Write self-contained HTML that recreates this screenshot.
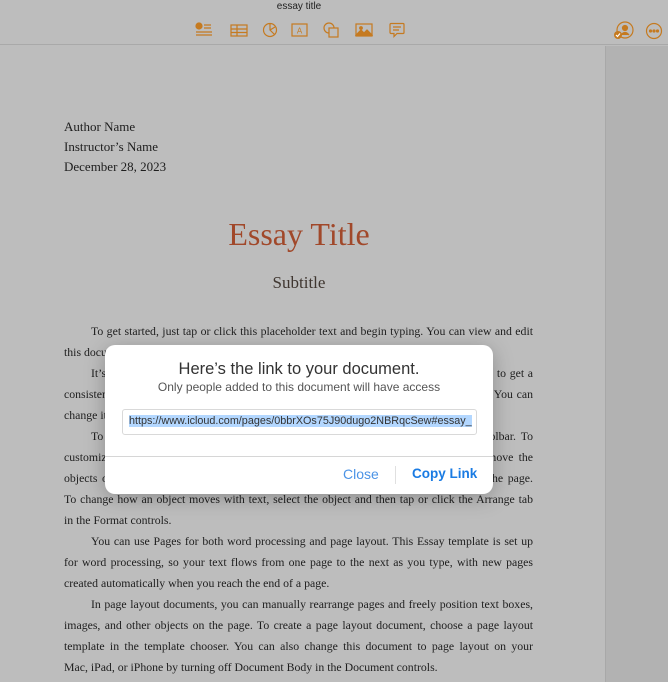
<!DOCTYPE html>
<html><head><meta charset="utf-8"><style>
*{margin:0;padding:0;box-sizing:border-box}
body{width:668px;height:682px;overflow:hidden;background:#bdbdbd;position:relative;font-family:"Liberation Sans",sans-serif}
.top{position:absolute;left:0;top:0;width:668px;height:45px;background:#bdbdbd;border-bottom:1px solid #a9a9a9}
.ttl{position:absolute;top:1px;left:0;width:598px;text-align:center;font-size:10px;color:#222}
.side{position:absolute;left:605px;top:46px;width:63px;height:636px;background:#b2b2b2;border-left:1px solid #a8a8a8}
svg.i{position:absolute}
.doc{position:absolute;font-family:"Liberation Serif",serif;color:#1e1e1e}
.hdr{left:64px;top:117px;font-size:13px;line-height:20px}
.et{left:0;width:598px;text-align:center;top:216px;font-size:32px;color:#a1482a}
.st{left:0;width:598px;text-align:center;top:273px;font-size:17px;color:#3f3630}
.body{left:64px;top:321px;width:469px;font-size:11.8px;line-height:21px}
.l{text-align:justify;text-align-last:justify;height:21px;overflow:hidden}
.in{padding-left:27px}
.e{text-align-last:left}
.dlg{position:absolute;left:105px;top:345px;width:388px;height:149px;background:#fff;border-radius:10px;box-shadow:0 4px 20px rgba(0,0,0,.25)}
.dt{position:absolute;top:15px;width:100%;text-align:center;font-size:16.5px;color:#333}
.ds{position:absolute;top:35px;width:100%;text-align:center;font-size:12px;color:#555}
.inp{position:absolute;left:17px;top:64px;width:355px;height:26px;border:1px solid #d9d9d9;border-radius:3px;padding:5px 0 0 6px;font-size:10.8px;color:#333;white-space:nowrap;overflow:hidden}
.inp span{background:#b3d7ff}
.sep{position:absolute;left:0;top:111px;width:100%;height:1px;background:#d6d6d6}
.vs{position:absolute;left:290px;top:121px;width:1px;height:18px;background:#e0e0e0}
.b1{position:absolute;left:238px;top:121px;font-size:14px;color:#4b93e6}
.b2{position:absolute;left:307px;top:121px;font-size:13.5px;color:#1a7be3;font-weight:bold}
</style></head><body>
<div class="top"><div class="ttl">essay title</div></div>
<svg class="i" style="left:195px;top:22px" width="18" height="16" viewBox="0 0 18 16" fill="none" stroke="#c57a20" stroke-width="1.2"><circle cx="4" cy="4" r="3" fill="#c57a20"/><path d="M9 3h7M9 6h7M1 10h16M1 13h16"/></svg>
<svg class="i" style="left:230px;top:24px" width="18" height="13" viewBox="0 0 18 13" fill="none" stroke="#c57a20" stroke-width="1.2"><rect x="1" y="1" width="16" height="11"/><path d="M1 5h16M1 8.5h16M7 1v11"/></svg>
<svg class="i" style="left:262px;top:22px" width="16" height="16" viewBox="0 0 16 16" fill="none" stroke="#c57a20" stroke-width="1.2"><circle cx="8" cy="8" r="6.5"/><path d="M8 1.5V8l4.5 4.5M8 8l5-3"/></svg>
<svg class="i" style="left:291px;top:23px" width="17" height="14" viewBox="0 0 17 14" fill="none" stroke="#c57a20" stroke-width="1.2"><rect x="1" y="1" width="15" height="12"/><text x="8.5" y="10.5" font-size="8" text-anchor="middle" fill="#c57a20" stroke="none" font-family="Liberation Sans">A</text></svg>
<svg class="i" style="left:323px;top:22px" width="16" height="16" viewBox="0 0 16 16" fill="none" stroke="#c57a20" stroke-width="1.2"><circle cx="6" cy="6" r="5"/><rect x="6" y="6" width="9" height="9" fill="#bdbdbd"/></svg>
<svg class="i" style="left:355px;top:23px" width="18" height="14" viewBox="0 0 18 14" fill="none" stroke="#c57a20" stroke-width="1.2"><rect x="1" y="1" width="16" height="12"/><path d="M1 12l5-5 3 3 3-3 5 5z" fill="#c57a20"/><circle cx="6" cy="5" r="1.3" fill="#c57a20"/></svg>
<svg class="i" style="left:389px;top:22px" width="16" height="16" viewBox="0 0 16 16" fill="none" stroke="#c57a20" stroke-width="1.2"><path d="M2 1.5h12a1 1 0 0 1 1 1v8a1 1 0 0 1-1 1H8l-3 3v-3H2a1 1 0 0 1-1-1v-8a1 1 0 0 1 1-1zM4 5h8M4 8h6"/></svg>
<svg class="i" style="left:613px;top:21px" width="21" height="20" viewBox="0 0 21 20" fill="none" stroke="#c57a20" stroke-width="1.2"><circle cx="12" cy="9" r="8"/><circle cx="12" cy="7" r="2.5" fill="#c57a20"/><path d="M8 14q4-5 8 0" fill="#c57a20"/><circle cx="5" cy="14" r="4" fill="#c57a20" stroke="none"/><path d="M3 14l1.5 1.5L7 12.5" stroke="#fff"/></svg>
<svg class="i" style="left:645px;top:22px" width="18" height="18" viewBox="0 0 18 18" fill="none" stroke="#c57a20" stroke-width="1.2"><circle cx="9" cy="9" r="7.5"/><circle cx="5.5" cy="9" r="1" fill="#c57a20"/><circle cx="9" cy="9" r="1" fill="#c57a20"/><circle cx="12.5" cy="9" r="1" fill="#c57a20"/></svg>
<div class="side"></div>
<div class="doc hdr">Author Name<br>Instructor’s Name<br>December 28, 2023</div>
<div class="doc et">Essay Title</div>
<div class="doc st">Subtitle</div>
<div class="doc body">
<div class="l in">To get started, just tap or click this placeholder text and begin typing. You can view and edit</div>
<div class="l e">this document in Pages on your Mac, iPad, iPhone, or on iCloud.com.</div>
<div class="l in">It’s easy to edit text, change fonts, and add beautiful graphics. Use paragraph styles to get a</div>
<div class="l">consistent look throughout your document. For example, this paragraph uses Body style. You can</div>
<div class="l e">change it in the Text tab of the Format controls.</div>
<div class="l in">To add images, charts, shapes, and other objects, tap or click a button in the toolbar. To</div>
<div class="l">customize an object, select it and then use the controls in the Format tab. You can move the</div>
<div class="l">objects on the page, and text flows around them automatically as you move them on the page.</div>
<div class="l">To change how an object moves with text, select the object and then tap or click the Arrange tab</div>
<div class="l e">in the Format controls.</div>
<div class="l in">You can use Pages for both word processing and page layout. This Essay template is set up</div>
<div class="l">for word processing, so your text flows from one page to the next as you type, with new pages</div>
<div class="l e">created automatically when you reach the end of a page.</div>
<div class="l in">In page layout documents, you can manually rearrange pages and freely position text boxes,</div>
<div class="l">images, and other objects on the page. To create a page layout document, choose a page layout</div>
<div class="l">template in the template chooser. You can also change this document to page layout on your</div>
<div class="l e">Mac, iPad, or iPhone by turning off Document Body in the Document controls.</div>
</div>
<div class="dlg">
<div class="dt">Here’s the link to your document.</div>
<div class="ds">Only people added to this document will have access</div>
<div class="inp"><span>https://www.icloud.com/pages/0bbrXOs75J90dugo2NBRqcSew#essay_</span></div>
<div class="sep"></div>
<div class="b1">Close</div>
<div class="vs"></div>
<div class="b2">Copy Link</div>
</div>
</body></html>
